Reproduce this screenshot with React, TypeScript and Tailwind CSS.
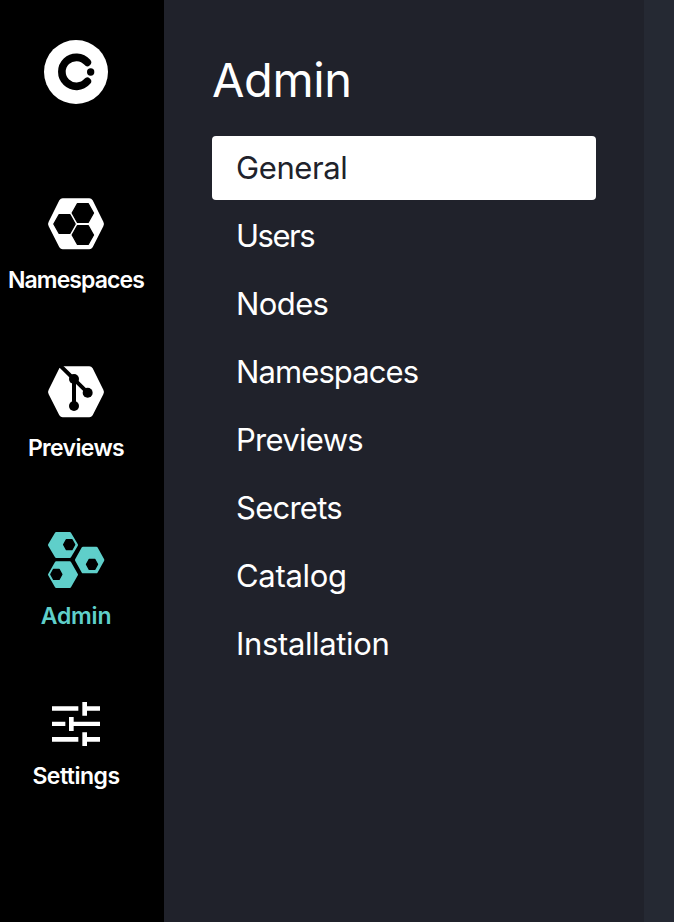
import type { ReactNode } from "react";

const hexagon = (cx: number, cy: number, rx: number, ry: number) =>
  `${cx - rx},${cy} ${cx - rx / 2},${cy - ry} ${cx + rx / 2},${cy - ry} ${cx + rx},${cy} ${cx + rx / 2},${cy + ry} ${cx - rx / 2},${cy + ry}`;

function Logo() {
  return (
    <svg className="h-20 w-20" viewBox="0 0 240 240">
      <circle cx="120" cy="120" r="96" fill="#fff" />
      <path d="M154 91A43.5 43.5 0 1 0 154 148" fill="none" stroke="#000" strokeWidth="23" strokeLinecap="round" />
      <circle cx="164" cy="120" r="11" fill="#000" />
    </svg>
  );
}

const outerHexagon =
  "M80 43H160Q166 43 170 49L202 113Q206 120 202 127L170 190Q166 196 160 196H80Q74 196 70 190L38 127Q34 120 38 113L70 49Q74 43 80 43Z";

function NamespacesIcon() {
  return (
    <svg className="h-20 w-20" viewBox="0 0 240 240">
      <path d={outerHexagon} fill="#fff" />
      <g fill="#000" stroke="#000" strokeWidth="4" strokeLinejoin="round">
        <polygon points={hexagon(85.5, 120, 32, 28)} />
        <polygon points={hexagon(140.5, 87, 32, 28)} />
        <polygon points={hexagon(140.5, 153, 32, 28)} />
      </g>
    </svg>
  );
}

function PreviewsIcon() {
  return (
    <svg className="h-20 w-20" viewBox="0 0 240 240">
      <path d={outerHexagon} fill="#fff" />
      <path d="M72 40L155 122M114 80V162" fill="none" stroke="#000" strokeWidth="12" />
      <circle cx="114" cy="81" r="15" />
      <circle cx="155" cy="122" r="15" />
      <circle cx="114" cy="162" r="15" />
    </svg>
  );
}

function AdminIcon() {
  return (
    <svg className="h-20 w-20" viewBox="0 0 240 240">
      <g fill="#5fcfca" stroke="#5fcfca" strokeWidth="8" strokeLinejoin="round">
        <polygon points={hexagon(81, 75, 41, 35)} />
        <polygon points={hexagon(161, 120, 40, 36)} />
        <polygon points={hexagon(81, 164, 41, 36)} />
      </g>
      <g fill="#000" stroke="#000" strokeWidth="4" strokeLinejoin="round">
        <polygon points={hexagon(99.5, 74, 16.5, 15)} />
        <polygon points={hexagon(168, 133, 16.5, 15)} />
        <polygon points={hexagon(61, 163, 16.5, 15)} />
      </g>
    </svg>
  );
}

function SettingsIcon() {
  return (
    <svg className="h-[70px] w-20" viewBox="0 0 240 210">
      <path
        d="M48 49h79v13H48zM139 36h14v13h39v13h-39v15h-14zM48 95h40v13H48zM99 81h14v14h79v13h-79v15H99zM48 141h79v14H48zM139 127h14v14h39v14h-39v13h-14z"
        fill="#fff"
      />
    </svg>
  );
}

function NavItem({ label, icon, className }: { label: string; icon: ReactNode; className: string }) {
  return (
    <a className={`flex flex-col items-center ${className}`}>
      {icon}
      <span className="text-[23px] leading-8 font-semibold whitespace-nowrap">{label}</span>
    </a>
  );
}

const menu = [
  { label: "General", style: "bg-white text-[#20222b] tracking-[-0.4px]" },
  { label: "Users", style: "text-white tracking-[-1.5px]" },
  { label: "Nodes", style: "text-white tracking-[-0.6px]" },
  { label: "Namespaces", style: "text-white tracking-[-0.9px]" },
  { label: "Previews", style: "text-white tracking-[-0.7px]" },
  { label: "Secrets", style: "text-white tracking-[-0.75px]" },
  { label: "Catalog", style: "text-white tracking-[-0.3px]" },
  { label: "Installation", style: "text-white tracking-[-0.35px]" },
];

export default function App() {
  return (
    <div className="flex h-[922px] w-[674px] overflow-hidden bg-[#252933] font-['Inter',sans-serif]">
      <nav className="flex w-[164px] shrink-0 flex-col items-center bg-black pt-8 pr-3 text-white">
        <Logo />
        <NavItem label="Namespaces" icon={<NamespacesIcon />} className="mt-[72px] tracking-[-0.9px]" />
        <NavItem label="Previews" icon={<PreviewsIcon />} className="mt-14 tracking-[-0.65px]" />
        <NavItem label="Admin" icon={<AdminIcon />} className="mt-14 tracking-[-0.2px] text-[#5fcfca]" />
        <NavItem label="Settings" icon={<SettingsIcon />} className="mt-[58px] tracking-[-0.5px]" />
      </nav>
      <aside className="w-[480px] shrink-0 bg-[#20222b] px-12 pt-12">
        <h1 className="h-[88px] text-[47px] leading-16 font-normal tracking-[-0.4px] text-white">Admin</h1>
        <ul className="flex flex-col gap-1">
          {menu.map((item) => (
            <li key={item.label} className={`h-16 rounded px-6 text-[31px] leading-16 ${item.style}`}>
              {item.label}
            </li>
          ))}
        </ul>
      </aside>
    </div>
  );
}
